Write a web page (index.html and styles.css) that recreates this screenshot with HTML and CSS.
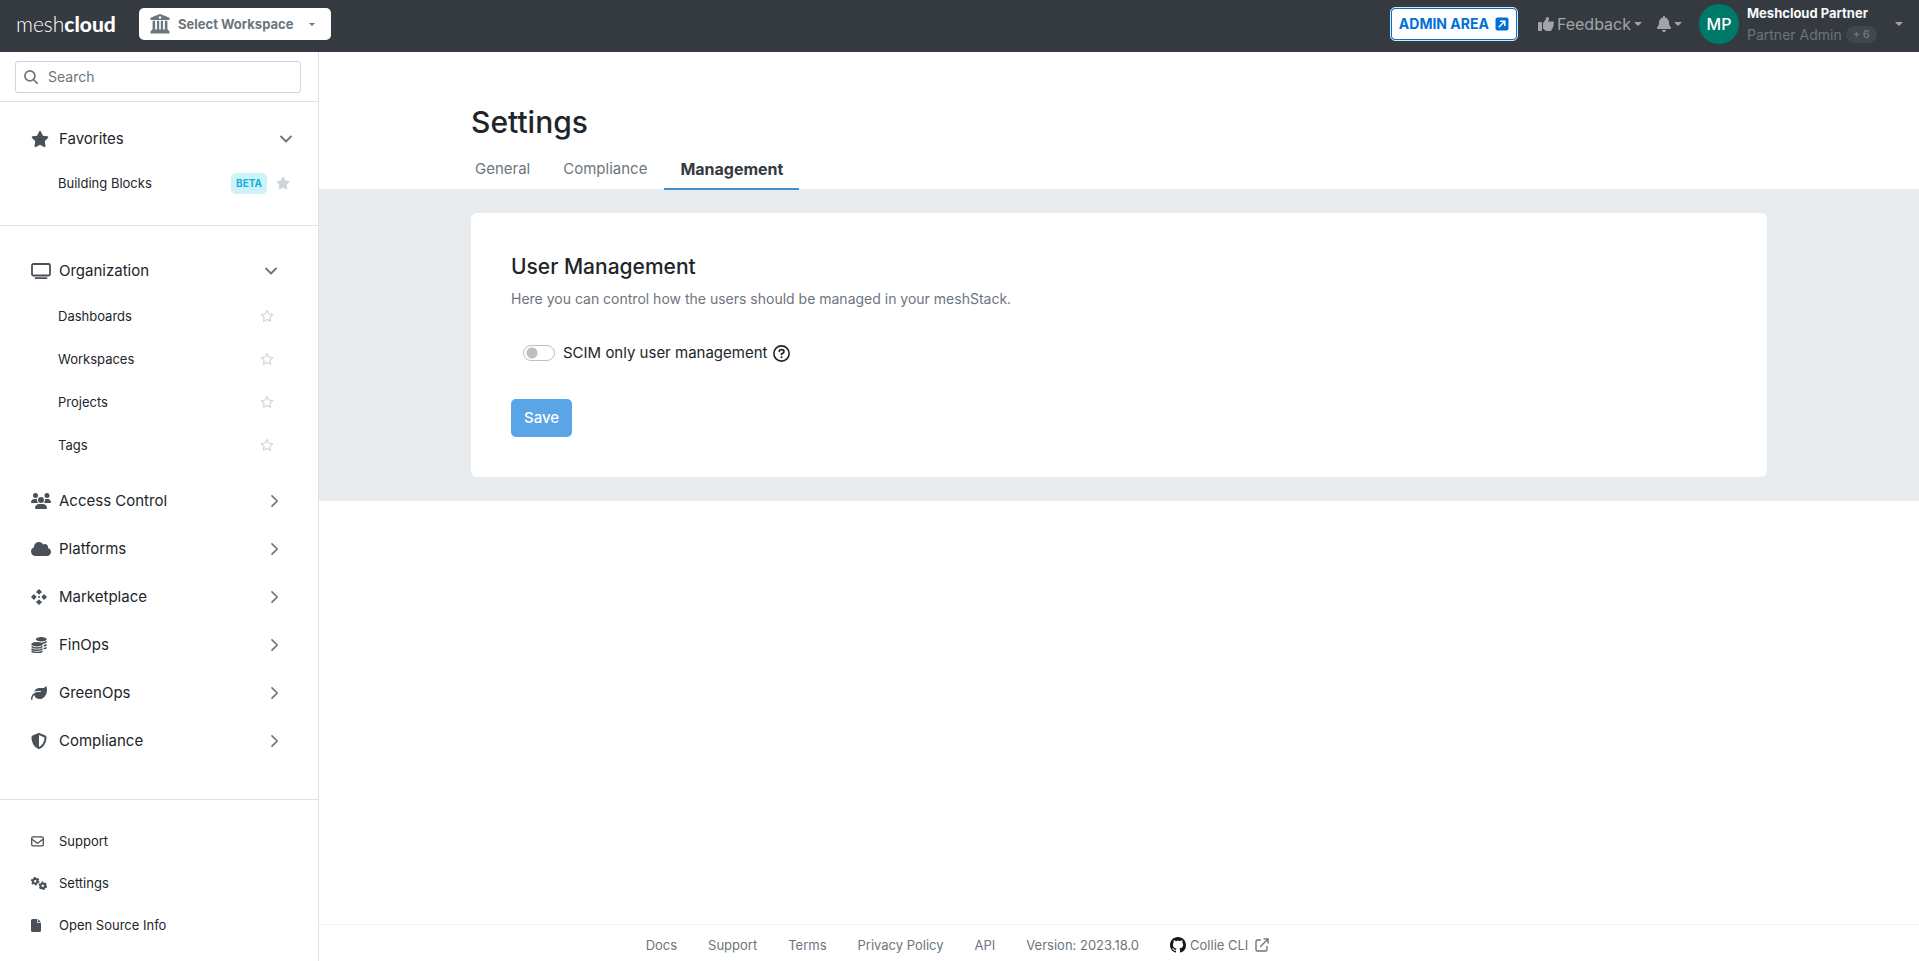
FILE: index.html
```
<!DOCTYPE html>
<html lang="en">
<head>
<meta charset="utf-8">
<title>Settings - meshcloud</title>
<link rel="stylesheet" href="styles.css">
</head>
<body>
<svg class="defs" aria-hidden="true">
  <symbol id="star" viewBox="0 0 576 512"><path d="M316.900 18C311.600 7 300.400 0 288.100 0s-23.400 7-28.800 18L195 150.300 51.400 171.500c-12 1.800-22 10.200-25.700 21.700s-.7 24.200 7.900 32.700L137.800 329 113.200 474.700c-2 12 3 24.200 12.900 31.300s23 8 33.800 2.300l128.300-68.500 128.300 68.500c10.800 5.700 23.900 4.900 33.800-2.300s14.900-19.300 12.900-31.300L438.500 329 542.700 225.900c8.600-8.500 11.700-21.200 7.900-32.700s-13.700-19.900-25.700-21.700L381.200 150.300 316.900 18z"/></symbol>
  <symbol id="star-line" viewBox="0 0 576 512"><path fill="none" stroke="currentColor" stroke-width="48" stroke-linejoin="round" d="M288 28l74 147 160 24-116 114 28 163-146-78-146 78 28-163L54 199l160-24z"/></symbol>
  <symbol id="down" viewBox="0 0 14 14"><path fill="none" stroke="currentColor" stroke-width="1.800" stroke-linecap="round" stroke-linejoin="round" d="M2 4.500l5 5 5-5"/></symbol>
  <symbol id="right" viewBox="0 0 14 14"><path fill="none" stroke="currentColor" stroke-width="1.700" stroke-linecap="round" stroke-linejoin="round" d="M5 1.800L10.200 7 5 12.200"/></symbol>
  <symbol id="caret" viewBox="0 0 8 4"><path d="M0 0h8L4 4z"/></symbol>
</svg>

<header class="topbar">
  <a class="logo" href="#"><span>mesh</span><b>cloud</b></a>
  <button class="workspace" type="button">
    <svg class="bank" viewBox="0 0 20 20"><path d="M10 0L1 3.600Q.5 3.900.5 4.500v1q0 .6.600.600h17.800q.6 0 .6-.6v-1q0-.6-.5-.9zM2.600 6.800h2.600v9H2.600zM7 6.800h2.200v9H7zM10.800 6.800H13v9h-2.200zM14.800 6.800h2.600v9h-2.600zM2 15.500h16l1.500 2.200v1.400q0 .5-.5.5H1q-.5 0-.5-.5v-1.400z"/><circle cx="10" cy="3.500" r="1.200" fill="#fff"/></svg>
    <span>Select Workspace</span>
    <svg class="caret small"><use href="#caret"/></svg>
  </button>
  <div class="tools">
    <button class="admin" type="button">ADMIN AREA
      <svg viewBox="0 0 14 14"><rect width="13" height="13" x=".5" y=".5" rx="2"/><path fill="none" stroke="#fff" stroke-width="1.500" d="M3.800 10.200l5.700-5.700M5 4.200h4.800V9"/></svg>
    </button>
    <button class="tool feedback" type="button">
      <svg class="i16" viewBox="0 0 512 512"><path d="M313.400 32.900c26 5.200 42.900 30.500 37.700 56.500l-2.300 11.400c-5.300 26.700-15.100 52.100-28.800 75.200H464c26.500 0 48 21.500 48 48 0 18.500-10.500 34.600-25.900 42.600C497 275.400 504 288.900 504 304c0 23.400-16.800 42.900-38.900 47.100 4.400 7.300 6.900 15.800 6.900 24.900 0 21.300-13.900 39.400-33.100 45.600.7 3.300 1.100 6.800 1.100 10.400 0 26.500-21.500 48-48 48h-97.500c-19 0-37.500-5.600-53.300-16.100l-38.500-25.700C176 420.400 160 390.400 160 358.300V247.100c0-29.200 13.300-56.700 36-75l7.400-5.900c26.500-21.200 44.600-51 51.200-84.200l2.300-11.400c5.200-26 30.500-42.900 56.500-37.700zM32 192h64c17.700 0 32 14.300 32 32v224c0 17.700-14.300 32-32 32H32c-17.700 0-32-14.300-32-32V224c0-17.700 14.300-32 32-32z"/></svg>
      <span>Feedback</span>
      <svg class="caret"><use href="#caret"/></svg>
    </button>
    <button class="tool bell" type="button" aria-label="Notifications">
      <svg class="i16" viewBox="0 0 448 512"><path d="M224 0c-17.700 0-32 14.300-32 32v19.200C119 66 64 130.600 64 208v18.800c0 47-17.300 92.400-48.500 127.600l-7.400 8.300c-8.400 9.400-10.400 22.900-5.300 34.400S19.400 416 32 416h384c12.600 0 24-7.400 29.200-18.900s3.100-25-5.300-34.400l-7.400-8.300C401.300 319.200 384 273.900 384 226.800V208c0-77.400-55-142-128-156.800V32c0-17.700-14.300-32-32-32zm45.300 493.300c12-12 18.700-28.300 18.700-45.300H160c0 17 6.700 33.300 18.700 45.300S207 512 224 512s33.300-6.700 45.300-18.700z"/></svg>
      <svg class="caret"><use href="#caret"/></svg>
    </button>
    <button class="user" type="button">
      <span class="avatar">MP</span>
      <span class="who"><b>Meshcloud Partner</b><span class="role">Partner Admin <i class="more">+ 6</i></span></span>
      <svg class="caret"><use href="#caret"/></svg>
    </button>
  </div>
</header>

<div class="page">
  <aside class="sidebar">
    <div class="searchwrap">
      <label class="search">
        <svg viewBox="0 0 14 14"><path fill="none" stroke="currentColor" stroke-width="1.700" stroke-linecap="round" d="M9.500 9.500l3.600 3.600M10.900 5.900a5 5 0 1 1-10 0a5 5 0 0 1 10 0z"/></svg>
        <input type="text" placeholder="Search" aria-label="Search">
      </label>
    </div>
    <nav class="block favorites">
      <button class="group" type="button"><svg class="wide"><use href="#star"/></svg><span>Favorites</span><svg class="chev"><use href="#down"/></svg></button>
      <div class="item"><a href="#">Building Blocks</a><span class="beta">BETA</span><svg class="fav"><use href="#star"/></svg></div>
    </nav>
    <nav class="block areas">
      <button class="group open" type="button"><svg class="wide" viewBox="0 0 20 16"><rect x="1" y="1" width="18" height="11.500" rx="1.500" fill="none" stroke="currentColor" stroke-width="1.800"/><path fill="none" stroke="currentColor" stroke-width="1.800" stroke-linecap="round" d="M4.500 15.100h11"/></svg><span>Organization</span><svg class="chev"><use href="#down"/></svg></button>
      <div class="item"><a href="#">Dashboards</a><svg class="fav"><use href="#star-line"/></svg></div>
      <div class="item"><a href="#">Workspaces</a><svg class="fav"><use href="#star-line"/></svg></div>
      <div class="item"><a href="#">Projects</a><svg class="fav"><use href="#star-line"/></svg></div>
      <div class="item last"><a href="#">Tags</a><svg class="fav"><use href="#star-line"/></svg></div>
      <button class="group" type="button"><svg class="wide" viewBox="0 0 640 512"><path d="M144 0a80 80 0 1 1 0 160 80 80 0 1 1 0-160zm368 0a80 80 0 1 1 0 160 80 80 0 1 1 0-160zM0 298.700C0 239.800 47.800 192 106.700 192h42.700c15.900 0 31 3.500 44.600 9.700-1.300 7.200-1.900 14.700-1.900 22.300 0 38.200 16.800 72.500 43.300 96H21.300C9.600 320 0 310.400 0 298.700zM405.300 320h-.7c26.600-23.500 43.300-57.800 43.300-96 0-7.600-.7-15-1.900-22.300 13.600-6.300 28.700-9.700 44.600-9.700h42.700C592.200 192 640 239.800 640 298.700c0 11.800-9.600 21.300-21.300 21.300zM224 224a96 96 0 1 1 192 0 96 96 0 1 1-192 0zM128 485.300C128 411.700 187.700 352 261.300 352h117.300C452.300 352 512 411.700 512 485.300c0 14.700-11.900 26.700-26.700 26.700H154.700c-14.700 0-26.700-11.900-26.700-26.700z"/></svg><span>Access Control</span><svg class="chev"><use href="#right"/></svg></button>
      <button class="group" type="button"><svg class="wide" viewBox="0 0 640 512"><path d="M0 336c0 79.500 64.500 144 144 144h368c70.700 0 128-57.300 128-128 0-61.900-44-113.600-102.400-125.400 4.100-10.700 6.400-22.400 6.400-34.600 0-53-43-96-96-96-19.700 0-38.100 6-53.300 16.200C367 64.200 315.300 32 256 32 167.600 32 96 103.600 96 192c0 2.700.1 5.400.2 8.100C40.200 219.800 0 273.200 0 336z"/></svg><span>Platforms</span><svg class="chev"><use href="#right"/></svg></button>
      <button class="group" type="button"><svg class="narrow" viewBox="0 0 16 16"><path d="M8 0l2.600 2.400V4H9.200v1.200H6.800V4H5.400V2.400zM8 16l2.600-2.400V12H9.200v-1.200H6.800V12H5.400v1.600zM0 8l2.400-2.600H4v1.400h1.200v2.400H4v1.400H2.400zM16 8l-2.400-2.600H12v1.400h-1.200v2.400H12v1.400h1.600z"/><circle cx="8" cy="8" r="1"/></svg><span>Marketplace</span><svg class="chev"><use href="#right"/></svg></button>
      <button class="group" type="button"><svg class="narrow" viewBox="0 0 16 16"><ellipse cx="10.300" cy="2.300" rx="5.500" ry="2.200"/><ellipse cx="6" cy="7.200" rx="5.600" ry="2.300"/><path fill="none" stroke="currentColor" stroke-width="1.500" d="M.6 9.300c1.500 2.200 9.300 2.200 10.800 0M.6 11.700c1.500 2.200 9.300 2.200 10.800 0M.6 14c1.500 2 9.300 2 10.800 0M11 6.200c2-.2 3.600-.7 4.500-1.600M12.600 8.900c1.300-.2 2.300-.600 2.900-1.300M12.600 11.700c1.300-.2 2.300-.600 2.900-1.300"/></svg><span>FinOps</span><svg class="chev"><use href="#right"/></svg></button>
      <button class="group" type="button"><svg class="narrow" viewBox="0 0 512 512"><path d="M272 96c-78.600 0-145.100 51.500-167.700 122.500 33.600-17 71.500-26.500 111.700-26.500h88c8.800 0 16 7.200 16 16s-7.200 16-16 16h-88c-16.600 0-32.700 1.900-48.200 5.400-25.900 5.900-50 16.400-71.400 30.700C38.300 298.800 0 364.900 0 440v16c0 13.300 10.700 24 24 24s24-10.700 24-24v-16c0-48.700 20.700-92.500 53.800-123.200C121.600 392.300 190.300 448 272 448h1c132.100-.7 239-130.900 239-291.400 0-42.600-7.500-83.100-21.100-119.600-2.600-6.900-12.700-6.600-16.200-.1C455.900 72.100 418.700 96 376 96z"/></svg><span>GreenOps</span><svg class="chev"><use href="#right"/></svg></button>
      <button class="group" type="button"><svg class="narrow" viewBox="0 0 512 512"><path fill-rule="evenodd" d="M256 0c4.600 0 9.200 1 13.400 2.900l188.300 79.900c22 9.300 38.400 31 38.300 57.200-.5 99.200-41.300 280.700-213.600 363.200-16.700 8-36.100 8-52.800 0C57.300 420.700 16.500 239.200 16 140c-.1-26.200 16.300-47.900 38.300-57.200L242.700 2.900C246.800 1 251.400 0 256 0zm0 66.800v378.100c138-66.800 175.100-214.800 176-303.400z"/></svg><span>Compliance</span><svg class="chev"><use href="#right"/></svg></button>
    </nav>
    <nav class="block extra">
      <a class="link" href="#"><svg viewBox="0 0 13 13"><rect x=".7" y="1.900" width="11.600" height="9" rx="1.400" fill="none" stroke="currentColor" stroke-width="1.300"/><path fill="none" stroke="currentColor" stroke-width="1.300" d="M1 4.200l4.600 3.600q.9.700 1.800 0L12 4.200"/></svg><span>Support</span></a>
      <a class="link" href="#"><svg class="gears" viewBox="0 0 16 13"><g fill="none" stroke="currentColor"><circle cx="4.200" cy="4.200" r="2.300" stroke-width="2.200"/><circle cx="4.200" cy="4.200" r="3.600" stroke-width="1.400" stroke-dasharray="1.900 1.870"/><circle cx="11.800" cy="8.800" r="2.300" stroke-width="2.200"/><circle cx="11.800" cy="8.800" r="3.600" stroke-width="1.400" stroke-dasharray="1.900 1.870"/></g></svg><span>Settings</span></a>
      <a class="link" href="#"><svg viewBox="0 0 13 13"><path d="M1.600 0h4.600v3.300q0 .7.700.7H10v7.500q0 1.500-1.500 1.500h-7Q0 13 0 11.500v-10Q0 0 1.600 0zM7 0l3 3.200H7z"/></svg><span>Open Source Info</span></a>
    </nav>
  </aside>

  <div class="content">
    <main>
      <div class="head container">
        <h1>Settings</h1>
        <nav class="tabs"><a href="#">General</a><a href="#">Compliance</a><a href="#" class="active" aria-current="page">Management</a></nav>
      </div>
      <div class="band">
        <div class="container">
          <section class="card">
            <h2>User Management</h2>
            <p>Here you can control how the users should be managed in your meshStack.</p>
            <div class="switchrow">
              <input type="checkbox" role="switch" id="scim" class="switch">
              <label for="scim">SCIM only user management</label>
              <svg class="outline help" viewBox="0 0 16 16"><circle cx="8" cy="8" r="7.200" stroke-width="1.500"/><path stroke-width="1.600" stroke-linecap="round" stroke-linejoin="round" d="M5.800 5.900q.3-1.500 2.200-1.500 2.300 0 2.300 1.700 0 1-1.100 1.600L8 8.500v.4"/><circle cx="8" cy="11.500" r=".5"/></svg>
            </div>
            <button class="save" type="button">Save</button>
          </section>
        </div>
      </div>
    </main>
    <footer class="footer">
      <a href="#">Docs</a><a href="#">Support</a><a href="#">Terms</a><a href="#">Privacy Policy</a><a href="#">API</a><span>Version: 2023.18.0</span>
      <a href="#" class="collie"><svg class="github" viewBox="0 0 16 16"><path d="M8 0C3.580 0 0 3.580 0 8c0 3.540 2.290 6.530 5.470 7.590.4.070.55-.17.55-.38 0-.19-.01-.82-.01-1.490-2.010.37-2.530-.49-2.690-.94-.09-.23-.48-.94-.82-1.130-.28-.15-.68-.52-.01-.53.63-.01 1.080.58 1.230.82.72 1.210 1.870.87 2.330.66.070-.52.28-.87.51-1.070-1.780-.2-3.640-.89-3.640-3.950 0-.87.31-1.590.82-2.150-.08-.2-.36-1.020.08-2.120 0 0 .67-.21 2.200.82.64-.18 1.320-.27 2-.27s1.360.09 2 .27c1.530-1.040 2.200-.82 2.200-.82.44 1.100.16 1.920.08 2.120.51.56.82 1.270.82 2.150 0 3.070-1.870 3.750-3.650 3.950.29.25.54.73.54 1.480 0 1.070-.01 1.930-.01 2.200 0 .21.15.46.55.38A8.010 8.010 0 0 0 16 8c0-4.420-3.580-8-8-8z"/></svg><span>Collie CLI</span><svg class="outline ext" viewBox="0 0 14 14" stroke-width="1.400" stroke-linecap="round" stroke-linejoin="round"><path d="M5.500 2H2.500Q1 2 1 3.500v8Q1 13 2.500 13h8q1.500 0 1.500-1.500v-3M9 .9h4.100V5M13 1L5.500 8.500"/></svg></a>
    </footer>
  </div>
</div>
</body>
</html>
```
FILE: styles.css
```
* { box-sizing: border-box; }
body {
  margin: 0;
  min-height: 100vh;
  display: flex;
  flex-direction: column;
  font-family: Inter, "Liberation Sans", sans-serif;
  font-size: 15px;
  line-height: 24px;
  color: #212529;
  background: #fff;
}
a { color: inherit; text-decoration: none; }
button { font: inherit; color: inherit; border: 0; background: none; padding: 0; cursor: pointer; }
svg { flex: none; fill: currentColor; }
.outline { fill: none; stroke: currentColor; }
.defs { display: none; }
.caret { width: 8px; height: 4px; }
.caret.small { width: 6px; height: 3px; }
.i16 { width: 16px; height: 16px; }

.topbar { height: 52px; display: flex; align-items: center; background: #343a40; padding: 0 16px 4px; }
.logo { display: flex; width: 99px; font-family: Lato, sans-serif; font-size: 21px; font-weight: 300; color: #fff; }
.logo b { font-weight: 900; }
.workspace {
  width: 192px; height: 32px; margin-left: 24px; padding: 0 16px 0 11px;
  display: flex; align-items: center; gap: 8px;
  background: #fff; border-radius: 5px; color: #6c757d; font-size: 13px; font-weight: 700;
}
.workspace .caret { margin-left: auto; }
.bank { width: 20px; height: 20px; }
.tools { margin-left: auto; display: flex; align-items: center; color: #a2a5a8; }
.admin {
  width: 126px; height: 32px; display: flex; align-items: center; justify-content: center; gap: 6px;
  border: 1px solid #0070d8; border-radius: 4px; outline: 1px solid #d6e8f8;
  background: #fff; color: #0070d8; font-size: 14px; font-weight: 700;
}
.admin svg { width: 14px; height: 14px; }
.tool { display: flex; align-items: center; gap: 4px; }
.feedback { margin-left: 21px; gap: 3px; font-size: 16px; }
.bell { margin-left: 14px; gap: 2px; }
.user { display: flex; align-items: center; margin-left: 17px; text-align: left; }
.avatar { width: 40px; height: 40px; border-radius: 50%; background: #007a68; color: #fff; font-size: 16px; font-weight: 500; line-height: 40px; text-align: center; }
.who { display: flex; flex-direction: column; width: 148px; margin-left: 8px; font-size: 14px; line-height: 21px; color: #6c757d; }
.who b { color: #f8f9fa; font-size: 13px; }
.role { display: flex; align-items: center; gap: 4px; white-space: nowrap; }
.more { padding: 0 7px; border-radius: 9px; background: #40474e; font-size: 11px; font-style: normal; font-weight: 600; line-height: 17px; }

.page { flex: 1; display: flex; }
.sidebar { width: 319px; flex: none; border-right: 1px solid #dee2e6; }
.searchwrap { padding: 9px 17px 8px 15px; border-bottom: 1px solid #dee2e6; }
.search { height: 32px; display: flex; align-items: center; gap: 10px; padding: 0 8px; border: 1px solid #ced4da; border-radius: 3px; color: #6c757d; }
.search svg { width: 14px; height: 14px; }
.search input { flex: 1; min-width: 0; border: 0; outline: 0; padding: 0; background: none; font: inherit; font-size: 14px; }
.search input::placeholder { color: #6c757d; opacity: 1; }
.block { padding: 20px 37px 20px 31px; border-bottom: 1px solid #dee2e6; }
.favorites { padding: 12px 25px 21px 31px; }
.areas { padding-bottom: 35px; }
.extra { border: 0; padding-bottom: 0; }
.group { width: 100%; height: 48px; padding-top: 2px; display: flex; align-items: center; text-align: left; color: #495057; }
.group span { flex: 1; color: #212529; }
.group .wide { width: 20px; height: 16px; margin-right: 8px; }
.group .narrow { width: 16px; height: 16px; margin-right: 12px; }
.favorites .wide { width: 18px; margin-right: 10px; }
.chev { width: 14px; height: 14px; color: #6c757d; }
.open .chev { margin-right: 3px; }
.item { height: 43px; display: flex; align-items: center; padding: 0 7px 0 27px; font-size: 13px; color: #212529; }
.favorites .item { height: 42px; padding-right: 3px; }
.item a { flex: 1; }
.item.last { margin-bottom: 10px; }
.fav { width: 14px; height: 14px; color: #ced4da; }
.beta { margin-right: 9px; padding: 0 5px; border-radius: 5px; background: #cff1f8; color: #0bb4d8; font-size: 10px; font-weight: 700; line-height: 21px; }
.link { height: 42px; display: flex; align-items: center; font-size: 13px; color: #495057; }
.link span { color: #212529; }
.link svg { width: 13px; height: 13px; margin-right: 15px; }
.link .gears { width: 16px; margin-right: 12px; }

.content { flex: 1; min-width: 0; display: flex; flex-direction: column; }
main { flex: 1; }
.container { width: 100%; max-width: 1320px; margin: 0 auto; padding: 0 12px; }
h1 { margin: 0; padding-top: 50px; font-size: 30px; font-weight: 500; line-height: 40px; }
.tabs { display: flex; gap: 1px; margin: 10px 0 -1px -12px; color: #6c757d; }
.tabs a { padding: 5px 16px 7px; border-bottom: 2px solid transparent; }
.tabs .active { border-color: #3d8fd1; color: #343a40; font-size: 16px; font-weight: 700; }
.band { background: #e7ebee; padding: 24px 0; }
.card { background: #fff; border-radius: 6px; padding: 39px 40px 40px; }
h2 { margin: 0; font-size: 21px; font-weight: 500; line-height: 30px; }
.card p { margin: 5px 0 0; font-size: 14px; color: #6c757d; }
.switchrow { display: flex; align-items: center; margin: 30px 0 0 12px; }
.switch { appearance: none; width: 32px; height: 16px; margin: 0 8px 0 0; border: 1px solid #bfbfbf; border-radius: 8px; background: radial-gradient(circle at 8px 7px, #bfbfbf 5px, transparent 6px); }
.help { width: 17px; height: 17px; margin-left: 6px; }
.save { display: block; margin-top: 34px; height: 38px; padding: 0 13px; border-radius: 5px; background: #5aa5e6; color: #fff; font-weight: 500; }
.footer { height: 37px; border-top: 1px solid #f4f5f6; display: flex; align-items: center; justify-content: center; gap: 31px; padding: 4px 323px 0 0; font-size: 13px; color: #6c757d; }
.collie { display: flex; align-items: center; }
.github { width: 16px; height: 16px; margin-right: 4px; color: #16191c; }
.ext { width: 14px; height: 14px; margin-left: 7px; }
```
